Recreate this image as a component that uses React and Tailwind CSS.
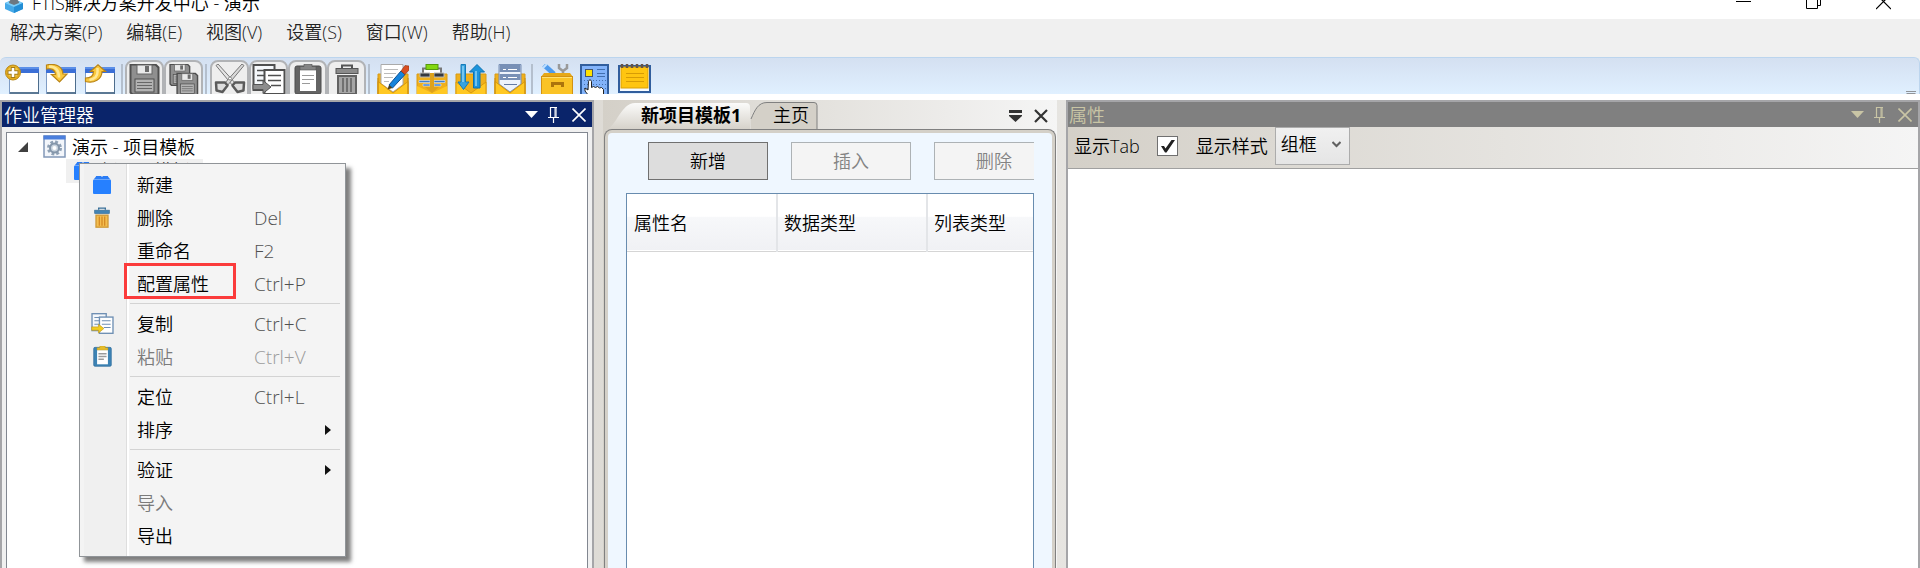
import React from "react";

const menus = ["解决方案(P)", "编辑(E)", "视图(V)", "设置(S)", "窗口(W)", "帮助(H)"];

function Ico({ children, className = "" }) {
  return (
    <svg viewBox="0 0 32 32" className={"h-8 w-8 shrink-0 " + className} aria-hidden="true">
      {children}
    </svg>
  );
}

function WindowShape() {
  return (
    <>
      <rect x="1.5" y="3.5" width="29" height="28" fill="#fff" stroke="#7f9cc4" />
      <rect x="1" y="3" width="30" height="6" fill="#3b6fd6" />
      <rect x="1" y="3" width="30" height="2" fill="#5b8fe8" />
      <path d="M2 28h28v2H2z" fill="#5b7894" />
      <path d="M30.5 9v22" stroke="#4d6d8d" />
    </>
  );
}

function NewIcon() {
  return (
    <svg viewBox="0 0 36 32" className="h-8 w-9 shrink-0" aria-hidden="true">
      <g transform="translate(4 0)"><WindowShape /></g>
      <circle cx="9" cy="8.500" r="7.500" fill="#e3ab1c" stroke="#b98a1c" />
      <circle cx="9" cy="8" r="5.500" fill="#f2c84a" />
      <path d="M9 3v11M3.500 8.500h11" stroke="#a57b18" strokeWidth="4.500" />
      <path d="M9 4v9M4.500 8.500h9" stroke="#fff" strokeWidth="2.600" />
    </svg>
  );
}

function OpenIcon() {
  return (
    <Ico>
      <WindowShape />
      <path d="M1.500 1C10-1 17.500 2 18 10h4L14.500 18 6.500 10.500h4C10.500 6.500 7 4 1.500 5Z" fill="#fbc83c" stroke="#b98518" strokeWidth="1.200" />
      <path d="M4 2.500c7 0 10 4 10 11" stroke="#ffe995" strokeWidth="2.500" fill="none" />
    </Ico>
  );
}

function CloseSolutionIcon() {
  return (
    <Ico>
      <WindowShape />
      <path d="M1.500 14C6 14 9.500 12 9.500 7.500H6.500L14 .8 21.500 7.500H18C18 15 10 20 1.500 17.500Z" fill="#fbc83c" stroke="#b98518" strokeWidth="1.200" />
      <path d="M13.500 4v4c0 4-3 7-8 8" stroke="#ffe995" strokeWidth="2.500" fill="none" />
    </Ico>
  );
}

function Floppy() {
  return (
    <>
      <path d="M1.500.5h25l3 3v27h-26l-2-2Z" fill="#8f8f8f" stroke="#4f4f4f" strokeWidth="2" />
      <rect x="8" y="1" width="15" height="9" fill="#e9e9e9" stroke="#666" />
      <rect x="16" y="2" width="4" height="6" fill="#6b6b6b" />
      <rect x="6" y="15" width="19" height="13" fill="#b3b3b3" stroke="#4f4f4f" />
      <path d="M8 18.500h15M8 21.500h15M8 24.500h15" stroke="#686868" />
    </>
  );
}

function SaveIcon() {
  return <Ico><Floppy /></Ico>;
}

function SaveAllIcon() {
  return (
    <Ico>
      <g transform="translate(1 0) scale(.7)"><Floppy /></g>
      <g transform="translate(8 9) scale(.73)"><Floppy /></g>
    </Ico>
  );
}

function CutIcon() {
  return (
    <Ico>
      <path d="M2 1.500 4 0 22 20l-3 2Z" fill="#e4e4e4" stroke="#777" />
      <path d="M30 1.500 28 0 10 20l3 2Z" fill="#d8d8d8" stroke="#777" />
      <path d="M2 18.500 11 18.500 13.500 21.500 8.500 28 2.500 26.500Z" fill="#ddd" stroke="#5b5b5b" strokeWidth="2.500" strokeLinejoin="round" />
      <path d="M30 18.500 21 18.500 18.500 21.500 23.500 28 29.500 26.500Z" fill="#ddd" stroke="#5b5b5b" strokeWidth="2.500" strokeLinejoin="round" />
      <circle cx="16" cy="14.500" r="1.500" fill="#fff" stroke="#888" />
    </Ico>
  );
}

function CopyIcon({ color, small }) {
  const ink = color ? "#6f90b4" : "#4f4f4f";
  return (
    <svg viewBox="0 0 34 31" className={small ? "h-[21px] w-[23px]" : "h-[31px] w-[34px] shrink-0"} aria-hidden="true">
      <rect x="1.500" y="1" width="21" height="25" fill="#f5f8fb" stroke={ink} strokeWidth="2" />
      <path d="M5 6.500h13M5 11.500h7M5 16.500h7" stroke={ink} strokeWidth="1.500" />
      <rect x="12.500" y="6" width="20" height="24" fill="#fff" stroke={ink} strokeWidth="2" />
      <path d="M16 11.500h13M16 16.500h13M19 21.500h10" stroke={ink} strokeWidth="1.500" />
      <path d="M1 20.500h10v-4l8 6.500-8 6.500v-4H1Z" fill={color ? "#f2cd1f" : "#8d8d8d"} stroke={color ? "#c09a20" : "#555"} />
    </svg>
  );
}

function PasteIcon({ color, small }) {
  return (
    <svg viewBox="0 0 28 31" className={small ? "h-[21px] w-[19px]" : "h-[31px] w-7 shrink-0"} aria-hidden="true">
      <rect x="1" y="2" width="26" height="28" rx="2" fill={color ? "#3d83b4" : "#646464"} stroke={color ? "#2e6c9c" : "#4c4c4c"} />
      <rect x="6" y="6" width="16" height="21" fill="#fff" />
      <path d="M8 11.500h12M8 15.500h12M8 19.500h8" stroke="#9a9a9a" strokeWidth={small ? 2 : 1} />
      <path d="M6 2.500h4V0h8v2.500h4V6H6Z" fill={color ? "#e6bc2a" : "#858585"} stroke={color ? "#c49b1f" : "#555"} strokeWidth=".6" />
    </svg>
  );
}

function TrashIcon({ color, small }) {
  const top = color ? "#4384b4" : "#8b8b8b";
  const edge = color ? "#386f98" : "#555";
  return (
    <svg viewBox="0 0 24 31" className={small ? "h-[21px] w-4" : "h-[31px] w-6 shrink-0"} aria-hidden="true">
      <path d="M7 4V1.500h10V4" fill="none" stroke={edge} strokeWidth="2" />
      <rect x="1" y="4.500" width="22" height="5" fill={top} stroke={edge} />
      <rect x="3" y="12" width="18" height="18" fill={color ? "#f4be4f" : "#a5a5a5"} stroke={color ? "#cf9a38" : "#626262"} strokeWidth="2" />
      <path d="M8 14v14M12 14v14M16 14v14" stroke={color ? "#d58a25" : "#707070"} strokeWidth="2" />
    </svg>
  );
}

function EnvelopeBack() {
  return <path d="M1 10h30v22H1Z" fill="#efb01c" stroke="#d89a14" />;
}
function EnvelopeFront() {
  return (
    <>
      <path d="M1 17.500 16 29 31 17.500V32H1Z" fill="#ffc823" stroke="#d8990d" />
      <path d="M1 14v18M31 14v18" stroke="#c88c10" />
    </>
  );
}

function EditIcon() {
  return (
    <Ico>
      <EnvelopeBack />
      <path d="M4 .5h22v20L16 28 4 19.500Z" fill="#fff" stroke="#aaa" />
      <path d="M7 5.500h14M7 9.500h12M7 13.500h9M7 17.500h5" stroke="#bbb" />
      <EnvelopeFront />
      <path d="M12 21 24 7l4 3.500L15.500 24Z" fill="#1684dc" stroke="#0c5192" />
      <path d="M24 7 28 1.500 32 2v4l-4 4.500Z" fill="#d94e20" stroke="#8c3211" strokeWidth=".6" />
      <path d="M12 21 10.500 25.500 15.500 24Z" fill="#4d3d16" />
    </Ico>
  );
}

function DatabaseIcon() {
  return (
    <Ico>
      <EnvelopeBack />
      <path d="M7 9V4.500h18V9" fill="#fff" stroke="#777" strokeWidth="2" />
      <rect x="10" y=".5" width="12" height="5" fill="#83d810" stroke="#569a0d" />
      <path d="M4 9h10v4H4ZM18 9h10v4H18Z" fill="#35393f" stroke="#bbb" />
      <path d="M3 16.500h11v2H3ZM18 16.500h11v2H18ZM7 20h7v2H7ZM18 20h7v2h-7Z" fill="#3d7fd2" stroke="#dceaff" strokeWidth=".6" />
      <path d="M1 22v10h30V22L16 29Z" fill="#ffc823" />
      <path d="M14 9h4v14h5l-7 6-7-6h5Z" fill="#dea21c" />
    </Ico>
  );
}

function SyncIcon() {
  return (
    <Ico>
      <EnvelopeBack />
      <path d="M1 18 16 29 31 18V32H1Z" fill="#ffc823" stroke="#d8990d" />
      <path d="M6 .5h4.500V18H14L8.500 25.500 3 18h3Z" fill="#36a2df" stroke="#157bb9" />
      <path d="M18.500 24V8H14.500L22 .5 29.500 8H25v16Z" fill="#1c94dc" stroke="#0e70ae" />
      <path d="M8 2v16M21 7v15" stroke="#8ed2f5" strokeWidth="1.500" />
    </Ico>
  );
}

function ReportIcon() {
  return (
    <Ico>
      <EnvelopeBack />
      <path d="M5 .5h22V20L16 28 5 20Z" fill="#edf3fc" stroke="#7890b6" />
      <path d="M5.500 1h21v7h-21ZM5.500 10h21v6h-21Z" fill="#7890b6" />
      <path d="M9 5.500h3M14 5.500h9M9 13.500h3M14 13.500h9" stroke="#fff" />
      <path d="M10 20.500h13" stroke="#647ba4" />
      <EnvelopeFront />
    </Ico>
  );
}

function ToolboxIcon() {
  return (
    <Ico>
      <path d="M3 1 13 10" stroke="#4f9bed" strokeWidth="5" />
      <path d="M2 4 6 0" stroke="#c0e0ff" strokeWidth="2" />
      <path d="M18 0v4l4 3 4-3V0M22 7v5" fill="none" stroke="#999" strokeWidth="2.500" />
      <path d="M3 9h26l3 4v19H0V13Z" fill="#e7a817" />
      <rect x=".5" y="12.500" width="31" height="19" fill="#fac326" stroke="#d29213" />
      <path d="M1 13.500h30" stroke="#ffe071" />
      <path d="M10 18h13v5h-3v-2h-7v2h-3Z" fill="#ac740c" />
    </Ico>
  );
}

function DesignIcon() {
  return (
    <Ico>
      <rect x="1" y="1" width="27" height="31" fill="#82b3fa" stroke="#315e9d" strokeWidth="2" />
      <rect x="5.500" y="5.500" width="7" height="7" fill="#ffe100" stroke="#45566d" />
      <path d="M17 5.500h8M17 9.500h8M17 12.500h8" stroke="#426fae" />
      <path d="M4 16.500h22M4 20.500h22M4 24.500h22" stroke="#4771ae" strokeDasharray="1 2" />
      <path d="M8.500 17.500c0-2 3-2 3 0v6l2-1 2 1 2-1 2 1.500 2-.5 2 2V32H9l-4-5v-3l3 2Z" fill="#fff" stroke="#222" />
    </Ico>
  );
}

function NoteIcon() {
  return (
    <svg viewBox="0 0 34 32" className="h-8 w-[34px] shrink-0" aria-hidden="true">
      <rect x="1" y="2" width="31" height="26" fill="#f8fcff" stroke="#315e9d" strokeWidth="2" />
      <rect x="3" y="3" width="27" height="21" fill="#ffc511" stroke="#dba005" />
      <path d="M8 9.500h18M8 13.500h18M8 17.500h18" stroke="#d79c05" />
      <path d="M4 0v4M9 0v4M14 0v4M19 0v4M24 0v4M29 0v4" stroke="#665447" strokeWidth="2.500" />
    </svg>
  );
}

function Sep() {
  return <span className="mx-[2px] mt-1 h-9 w-0.5 shrink-0 bg-[#b4bfcd]" />;
}

function ToolButton({ label, children, framed }) {
  return (
    <button
      type="button"
      aria-label={label}
      className={
        framed
          ? "flex h-11 w-[39px] shrink-0 justify-center rounded-lg border-2 border-[#b1b3b6] bg-[#eeeeee] pt-[2px]"
          : "flex h-11 w-[39px] shrink-0 justify-center pt-1"
      }
    >
      {children}
    </button>
  );
}

function CaptionButtons() {
  return (
    <div className="flex items-center gap-[10px]">
      <button type="button" aria-label="选项">
        <svg viewBox="0 0 13 7" className="h-[7px] w-[13px]"><path d="M0 0h13L6.500 7Z" fill="currentColor" /></svg>
      </button>
      <button type="button" aria-label="固定">
        <svg viewBox="0 0 12 16" className="h-4 w-3" fill="none" stroke="currentColor">
          <path d="M2.500 0v10M2 .5h7M8 0v10M0 10.500h11M5.500 11v5" strokeWidth="1.200" />
          <path d="M7 1v9" />
        </svg>
      </button>
      <button type="button" aria-label="关闭" className="ml-[2px]">
        <svg viewBox="0 0 14 14" className="h-[14px] w-[14px]" stroke="currentColor" strokeWidth="1.600"><path d="M.5.5l13 13M13.500.5l-13 13" /></svg>
      </button>
    </div>
  );
}

function Cube() {
  return (
    <svg viewBox="0 0 18 18" className="h-[18px] w-[18px] shrink-0" aria-hidden="true">
      <path d="M3 0h5v3H3ZM10 0h5v3h-5Z" fill="#2b7df5" />
      <path d="M1 3 3 .5h12L17 3Z" fill="#2b7df5" />
      <rect y="3.500" width="18" height="14.500" rx="1" fill="#2680ff" />
      <path d="M1 3.500h16" stroke="#6ea8fb" />
    </svg>
  );
}

function MenuRow({ icon, label, keys, sub, disabled, marked }) {
  return (
    <button
      type="button"
      role="menuitem"
      disabled={disabled}
      className={"flex h-[33px] w-full items-center text-left " + (disabled ? "text-[#7b7b7b]" : "text-black")}
    >
      <span className="flex w-11 shrink-0 justify-center pr-[6px]">{icon}</span>
      <span className="relative w-[127px] shrink-0 pl-[10px]">
        {label}
        {marked && <span className="absolute -top-[9px] -left-[3px] h-9 w-28 border-3 border-[#fb3b3b]" />}
      </span>
      <span className={"flex-1 text-[19px] " + (disabled ? "text-[#9b9b9b]" : "text-[#505050]")}>{keys}</span>
      {sub && (
        <svg viewBox="0 0 6 10" className="mr-[11px] h-[10px] w-[6px]"><path d="M0 0l6 5-6 5Z" fill="#111" /></svg>
      )}
    </button>
  );
}

function MenuSep() {
  return <div role="separator" className="mr-[2px] ml-[47px] flex h-[7px] items-center"><span className="h-px w-full bg-[#d3d3d3]" /></div>;
}

function ContextMenu() {
  return (
    <div
      role="menu"
      className="w-[267px] border border-[#909498] bg-[#f4f4f4] bg-[linear-gradient(90deg,#f4f4f4_4px,#f0f0f0_4px,#f0f0f0_46px,#dedede_46px,#dedede_47px,#ffffff_47px,#ffffff_49px,#f4f4f4_49px)] px-[3px] py-1 shadow-[5px_5px_4px_rgba(0,0,0,0.5)]"
    >
      <MenuRow icon={<Cube />} label="新建" />
      <MenuRow icon={<TrashIcon color small />} label="删除" keys="Del" />
      <MenuRow label="重命名" keys="F2" />
      <MenuRow label="配置属性" keys="Ctrl+P" marked />
      <MenuSep />
      <MenuRow icon={<CopyIcon color small />} label="复制" keys="Ctrl+C" />
      <MenuRow icon={<PasteIcon color small />} label="粘贴" keys="Ctrl+V" disabled />
      <MenuSep />
      <MenuRow label="定位" keys="Ctrl+L" />
      <MenuRow label="排序" sub />
      <MenuSep />
      <MenuRow label="验证" sub />
      <MenuRow label="导入" disabled />
      <MenuRow label="导出" />
    </div>
  );
}

function JobPanel() {
  return (
    <section className="relative flex w-[594px] shrink-0 flex-col border-x-2 border-t-2 border-[#a5a5a8] bg-[#f0f0f0]">
      <header className="flex h-[25px] shrink-0 items-center justify-between bg-[#0a246a] pr-[6px] pl-[2px] text-white">
        <h2>作业管理器</h2>
        <CaptionButtons />
      </header>
      <div className="mx-1 mt-[5px] flex-1 border border-b-0 border-[#828790] bg-white pt-[2px]">
        <div className="flex h-6 items-center pl-[11px]">
          <svg viewBox="0 0 10 10" className="h-[10px] w-[10px]"><path d="M10 0v10H0Z" fill="#404040" /></svg>
          <svg viewBox="0 0 24 24" className="ml-[15px] h-6 w-6" aria-hidden="true">
            <rect x="1" y="1" width="21" height="21" fill="#f3f6fb" stroke="#8298b8" strokeWidth="1.500" />
            <rect x=".5" y=".5" width="22" height="4" fill="#4b7fdd" />
            <circle cx="11.500" cy="13" r="6" fill="none" stroke="#8fa1b5" strokeWidth="3" strokeDasharray="2.700 2" />
            <circle cx="11.500" cy="13" r="4.500" fill="#cad5e0" stroke="#8496aa" strokeWidth="2" />
            <circle cx="11.500" cy="13" r="2" fill="#fff" />
          </svg>
          <span className="ml-[5px]">演示 - 项目模板</span>
        </div>
        <div className="ml-[59px] flex h-6 w-[137px] items-center bg-[#f0f0f0] pl-2 whitespace-nowrap">
          <Cube />
          <span className="ml-2">新项目模板1</span>
        </div>
      </div>
      <div className="absolute top-[61px] left-[77px] z-10">
        <ContextMenu />
      </div>
    </section>
  );
}

function DocumentPanel() {
  return (
    <section className="flex w-[454px] shrink-0 flex-col bg-linear-to-r from-[#d4d0c8] to-[#f5f5f5]">
      <div role="tablist" className="flex h-[29px] shrink-0 items-stretch pt-[2px]">
        <button type="button" role="tab" aria-selected="true" className="relative w-[147px] pb-[2px] pl-[38px] text-left font-bold">
          <svg viewBox="0 0 147 27" className="absolute inset-0 h-[27px] w-[147px]" aria-hidden="true">
            <defs><linearGradient id="tabfill" x1="0" y1="0" x2="0" y2="1"><stop offset="0" stopColor="#fbfbfa" /><stop offset="1" stopColor="#d6d2ca" /></linearGradient></defs>
            <path d="M4 27C13 25 18 1 32 1h111q4 0 4 4v22Z" fill="url(#tabfill)" />
          </svg>
          <span className="relative">新项目模板1</span>
        </button>
        <button type="button" role="tab" aria-selected="false" className="relative w-[68px] pb-[2px] pl-[23px] text-left">
          <svg viewBox="0 0 68 27" className="absolute inset-0 h-[27px] w-[68px]" aria-hidden="true">
            <path d="M1 17C5 8 8 .5 17 .5H64q3 0 3 3V27H1Z" fill="#d4d0c8" />
            <path d="M1 17C5 8 8 .5 17 .5H64q3 0 3 3V27" fill="none" stroke="#808080" />
          </svg>
          <span className="relative">主页</span>
        </button>
        <div className="ml-auto flex items-center gap-3 pr-[9px] text-[#333]">
          <button type="button" aria-label="文档列表">
            <svg viewBox="0 0 13 12" className="h-3 w-[13px]" fill="currentColor"><path d="M0 0h13v3H0ZM0 5h13v1L6.500 12 0 6Z" /></svg>
          </button>
          <button type="button" aria-label="关闭文档">
            <svg viewBox="0 0 14 14" className="h-[14px] w-[14px]" stroke="currentColor" strokeWidth="2.200"><path d="M1 1l12 12M13 1L1 13" /></svg>
          </button>
        </div>
      </div>
      <div className="mr-px ml-px flex flex-1 flex-col rounded-t-lg border-x border-t border-[#808080] bg-[#d4d0c8] px-[3px] pt-[3px]">
        <div className="flex flex-1 flex-col overflow-hidden rounded-t-sm bg-[#eff7ff] pr-[18px] pl-[18px]">
          <div className="flex gap-[23px] overflow-hidden pt-[9px] pl-[22px]">
            <button type="button" className="h-[38px] w-[120px] shrink-0 border border-[#707070] bg-[#dddddd]">新增</button>
            <button type="button" disabled className="h-[38px] w-[120px] shrink-0 border border-[#adb2b5] bg-[#f4f4f4] text-[#838383]">插入</button>
            <button type="button" disabled className="h-[38px] w-[120px] shrink-0 border border-[#adb2b5] bg-[#f4f4f4] text-[#838383]">删除</button>
          </div>
          <div className="mt-[13px] flex-1 border border-b-0 border-[#688caf] bg-white">
            <table className="w-full table-fixed border-collapse">
              <thead>
                <tr className="h-[57px] border-b border-[#d5d5d5] bg-[linear-gradient(#ffffff_0%,#ffffff_40%,#f7f8fa_41%,#f0f1f4_100%)]">
                  <th className="w-[150px] border-r-2 border-[#e3e5e8] pt-px pl-[7px] text-left font-[350]">属性名</th>
                  <th className="w-[150px] border-r-2 border-[#e3e5e8] pt-px pl-[6px] text-left font-[350]">数据类型</th>
                  <th className="pt-px pl-[6px] text-left font-[350]">列表类型</th>
                </tr>
              </thead>
            </table>
          </div>
        </div>
      </div>
    </section>
  );
}

function PropertyPanel() {
  return (
    <section className="flex min-w-0 flex-1 flex-col border-x-2 border-t-2 border-[#a5a5a8] bg-white">
      <header className="flex h-[25px] shrink-0 items-center justify-between bg-[#808080] pr-[6px] pl-px text-[#c9c5a5]">
        <h2>属性</h2>
        <CaptionButtons />
      </header>
      <div className="flex h-[42px] shrink-0 items-start border-b border-[#a0a0a0] bg-linear-to-r from-[#d4d0c8] to-[#f5f5f5] pl-[6px]">
        <label htmlFor="showTab" className="pt-[7px]">显示Tab</label>
        <span className="mt-[9px] ml-[17px] grid">
          <input id="showTab" type="checkbox" defaultChecked className="peer col-start-1 row-start-1 h-5 w-[21px] appearance-none border border-[#707070] bg-white" />
          <svg viewBox="0 0 21 20" className="pointer-events-none invisible col-start-1 row-start-1 h-5 w-[21px] peer-checked:visible" aria-hidden="true">
            <path d="M4 10h3l1.500 2.500L14.500 4H18L9.500 16.500H8Z" fill="#202020" />
          </svg>
        </span>
        <label htmlFor="showStyle" className="ml-[18px] pt-[7px]">显示样式</label>
        <span className="ml-[7px] grid">
          <select id="showStyle" className="col-start-1 row-start-1 h-[38px] w-[75px] appearance-none border border-[#acacac] bg-linear-to-b from-[#f0f0f0] to-[#e5e5e5] pb-1 pl-[5px]">
            <option>组框</option>
          </select>
          <svg viewBox="0 0 9 7" className="pointer-events-none col-start-1 row-start-1 mt-[14px] mr-[9px] h-[7px] w-[9px] justify-self-end" fill="none" stroke="#606060" strokeWidth="2" aria-hidden="true">
            <path d="M.5 1l4 4 4-4" />
          </svg>
        </span>
      </div>
    </section>
  );
}

export default function App() {
  return (
    <div className="flex h-screen flex-col overflow-hidden bg-white font-['Open_Sans','Noto_Sans_CJK_SC',sans-serif] text-[18px] leading-6 font-[350] text-black">
      <header className="flex h-[19px] shrink-0 items-end justify-between overflow-hidden pr-[29px] pl-[5px]">
        <div className="flex h-8 shrink-0 items-center gap-[9px]">
          <svg viewBox="0 0 18 20" className="h-5 w-[18px]" aria-hidden="true">
            <path d="M0 10 9 6l9 4v6l-9 4-9-4Z" fill="#45a9e8" />
            <path d="M0 10l9 4 9-4-9-4Z" fill="#7bcdf8" />
            <path d="M9 14v6l9-4v-6Z" fill="#238ed5" />
            <path d="M4 10c0-3 3-4 5-4s5 1 5 4l-5 2Z" fill="#6c7881" />
            <circle cx="9" cy="4" r="3.500" fill="#6c7881" />
          </svg>
          <h1>FTIS解决方案开发中心 - 演示</h1>
        </div>
        <div className="flex h-[34px] shrink-0 items-center gap-[55px]">
          <button type="button" aria-label="最小化"><svg viewBox="0 0 15 15" className="h-[15px] w-[15px]" stroke="#000"><path d="M0 6.500h15" /></svg></button>
          <button type="button" aria-label="还原"><svg viewBox="0 0 15 15" className="h-[15px] w-[15px]" fill="none" stroke="#000"><path d="M.5 3.500h11v10H.5ZM3.500 3.500v-3h11v10h-3" /></svg></button>
          <button type="button" aria-label="关闭窗口"><svg viewBox="0 0 15 15" className="h-[15px] w-[15px]" stroke="#000" strokeWidth="1.200"><path d="M0-1l15 15M15-1L0 14" /></svg></button>
        </div>
      </header>

      <nav className="flex h-[38px] shrink-0 items-start gap-6 bg-[#f0f0f0] pt-px pl-[10px] text-[#222]">
        {menus.map((m) => <button key={m} type="button">{m}</button>)}
      </nav>

      <div className="shrink-0 bg-[#f0f0f0]">
        <div role="toolbar" className="flex h-[37px] items-start overflow-hidden rounded-t-md border-t border-r border-[#bcd5ee] bg-linear-to-b from-[#d4e0f1] to-[#e0f0ff] pt-[2px] pl-[2px]">
          <ToolButton label="新建解决方案"><NewIcon /></ToolButton>
          <ToolButton label="打开解决方案"><OpenIcon /></ToolButton>
          <ToolButton label="关闭解决方案"><CloseSolutionIcon /></ToolButton>
          <Sep />
          <ToolButton framed label="保存"><SaveIcon /></ToolButton>
          <ToolButton framed label="全部保存"><SaveAllIcon /></ToolButton>
          <Sep />
          <div className="ml-px flex">
            <ToolButton framed label="剪切"><CutIcon /></ToolButton>
            <ToolButton framed label="复制"><CopyIcon /></ToolButton>
            <ToolButton framed label="粘贴"><PasteIcon /></ToolButton>
            <ToolButton framed label="删除"><TrashIcon /></ToolButton>
          </div>
          <Sep />
          <div className="ml-px flex">
            <ToolButton label="编辑"><EditIcon /></ToolButton>
            <ToolButton label="数据"><DatabaseIcon /></ToolButton>
            <ToolButton label="同步"><SyncIcon /></ToolButton>
            <ToolButton label="报表"><ReportIcon /></ToolButton>
          </div>
          <Sep />
          <div className="ml-[2px] flex">
            <ToolButton label="工具箱"><ToolboxIcon /></ToolButton>
            <ToolButton label="设计"><DesignIcon /></ToolButton>
            <ToolButton label="便签"><NoteIcon /></ToolButton>
          </div>
          <button type="button" aria-label="更多" className="mt-[31px] mr-[3px] ml-auto">
            <svg viewBox="0 0 10 8" className="h-2 w-[10px]"><path d="M0 0h10v1H0ZM0 2h10L5 7Z" fill="#909499" /></svg>
          </button>
        </div>
      </div>

      <main className="mt-[6px] flex min-h-0 flex-1 gap-[9px] bg-linear-to-r from-[#d4d0c8] to-[#f5f5f5]">
        <JobPanel />
        <DocumentPanel />
        <PropertyPanel />
      </main>
    </div>
  );
}
